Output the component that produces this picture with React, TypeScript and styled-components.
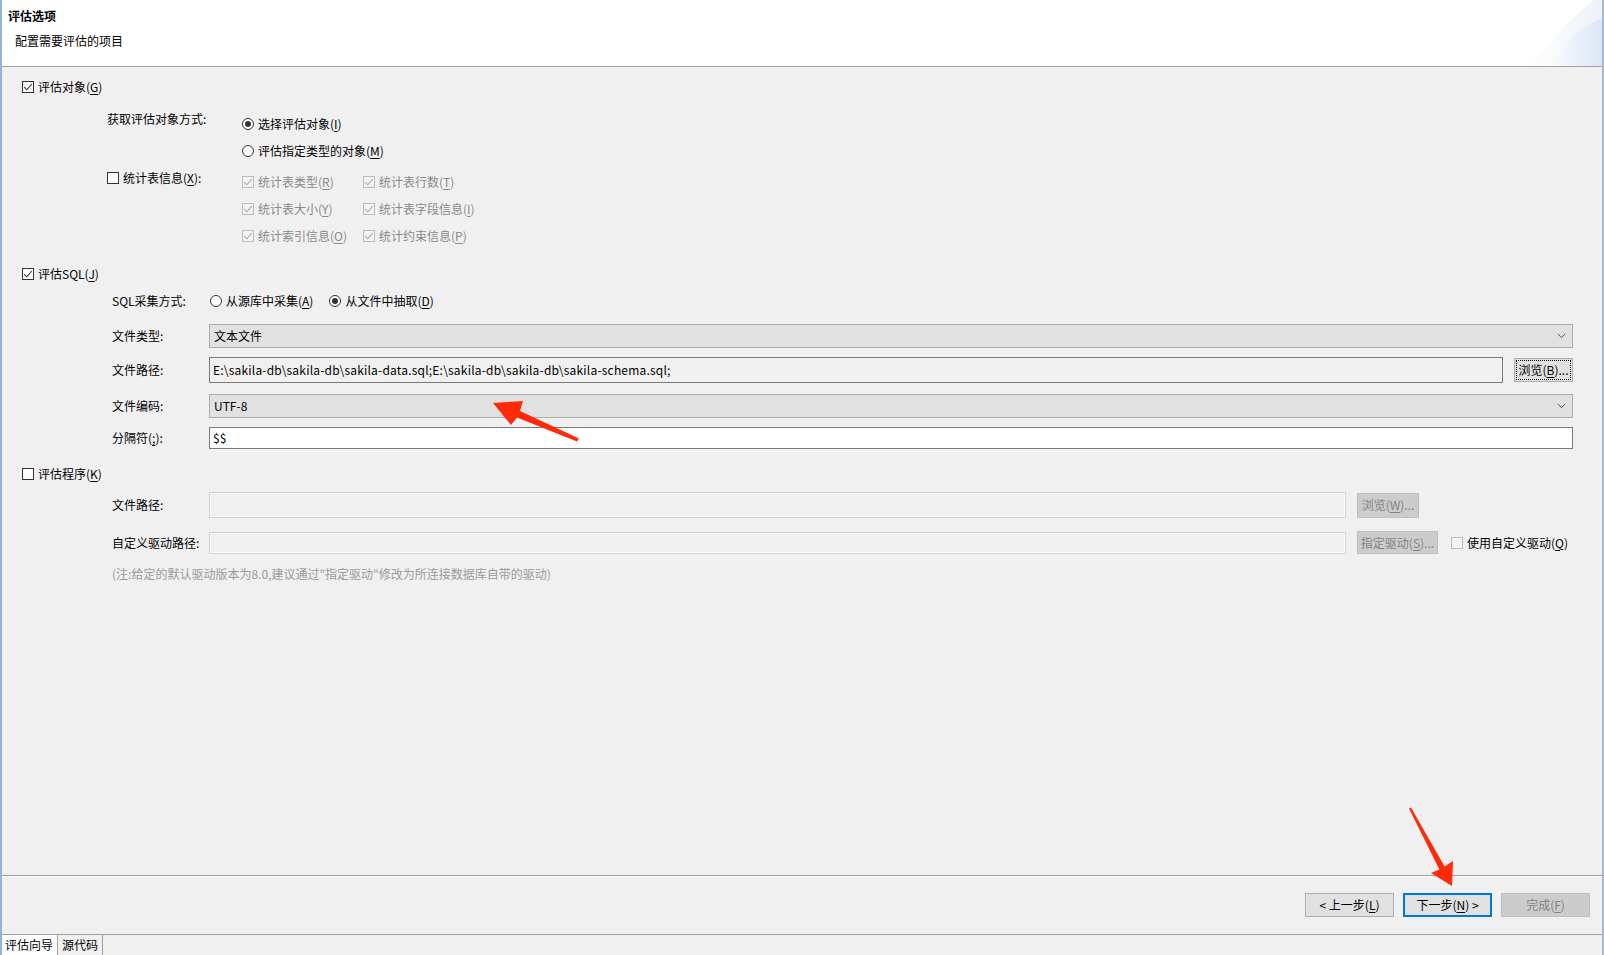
import React from "react";
import styled, { createGlobalStyle } from "styled-components";

const GlobalStyle = createGlobalStyle`
  html, body { margin: 0; padding: 0; }
  body {
    font-family: "Noto Sans CJK SC", "Noto Sans", sans-serif;
    font-size: 12px;
    color: #000;
    background: #f0f0f0;
  }
  * { box-sizing: border-box; }
  u { text-decoration: underline; text-underline-offset: 2px; }
`;

const Window = styled.div`
  position: relative;
  width: 1604px;
  height: 955px;
  display: flex;
  flex-direction: column;
  border-left: 2px solid #95b3da;
  border-right: 2px solid #aab9cd;
  background: #f0f0f0;
  overflow: hidden;
`;

const Header = styled.header`
  flex: none;
  height: 67px;
  background: #fff;
  border-bottom: 1px solid #a0a0a0;
  display: flex;
  justify-content: space-between;
`;

const HeaderText = styled.div`
  display: flex;
  flex-direction: column;
  padding: 6px 0 0 6px;
`;

const Title = styled.div`
  font-weight: 700;
  line-height: 20px;
`;

const Subtitle = styled.div`
  margin-top: 5px;
  padding-left: 7px;
  line-height: 20px;
`;

const Banner = styled.svg`
  flex: none;
  width: 84px;
  height: 66px;
  display: block;
`;

const Content = styled.main`
  flex: 1;
  padding: 10px 0 0 20px;
  display: flex;
  flex-direction: column;
`;

const Section = styled.section<{ $mt: number }>`
  margin-top: ${(p) => p.$mt}px;
  display: flex;
  flex-direction: column;
`;

const CheckRow = styled.label<{ $disabled?: boolean; $pl?: number }>`
  display: flex;
  align-items: center;
  gap: 4px;
  height: 20px;
  line-height: 16px;
  white-space: nowrap;
  padding-left: ${(p) => p.$pl ?? 0}px;
  color: ${(p) => (p.$disabled ? "#8a8a8a" : "#000")};
`;

const Box = styled.span<{ $disabled?: boolean }>`
  flex: none;
  width: 12px;
  height: 12px;
  border: 1px solid ${(p) => (p.$disabled ? "#bcbcbc" : "#333")};
  background: ${(p) => (p.$disabled ? "#f3f3f3" : "#fff")};
  display: flex;
  align-items: center;
  justify-content: center;
`;

const RadioCircle = styled.span<{ $on?: boolean }>`
  flex: none;
  width: 12px;
  height: 12px;
  border-radius: 50%;
  border: 1px solid #333;
  background: #fff;
  display: flex;
  align-items: center;
  justify-content: center;
  &::after {
    content: "";
    width: 6px;
    height: 6px;
    border-radius: 50%;
    background: #333;
    display: ${(p) => (p.$on ? "block" : "none")};
  }
`;

/* ---- section 1 ---- */
const ObjBlock = styled.div`
  margin: 12px 0 0 85px;
  display: grid;
  grid-template-columns: 135px auto;
  row-gap: 7px;
  align-items: start;
`;

const TopLabel = styled.div`
  line-height: 20px;
  height: 20px;
`;

const RadioStack = styled.div`
  padding-top: 5px;
  display: flex;
  flex-direction: column;
  gap: 7px;
`;

const OptionGrid = styled.div`
  padding-top: 4px;
  display: grid;
  grid-template-columns: 121px auto;
  row-gap: 7px;
`;

/* ---- form rows ---- */
const FormBody = styled.div`
  margin-left: 90px;
  padding-right: 29px;
  display: flex;
  flex-direction: column;
`;

const FormRow = styled.div<{ $mt: number; $h: number }>`
  margin-top: ${(p) => p.$mt}px;
  height: ${(p) => p.$h}px;
  display: flex;
  align-items: center;
`;

const FieldLabel = styled.div`
  flex: none;
  width: 97px;
  line-height: 16px;
  white-space: nowrap;
`;

const RadioLine = styled.div`
  display: flex;
  gap: 16px;
  padding-left: 1px;
`;

const Combo = styled.div`
  flex: 1;
  align-self: stretch;
  background: #e1e1e1;
  border: 1px solid #adadad;
  display: flex;
  align-items: center;
  justify-content: space-between;
  padding: 0 6px 0 4px;
  line-height: 16px;
`;

const TextField = styled.div<{ $bg: string; $ls?: number }>`
  flex: 1;
  align-self: stretch;
  background: ${(p) => p.$bg};
  border: 1px solid #7a7a7a;
  display: flex;
  align-items: center;
  padding: 0 3px;
  line-height: 16px;
  letter-spacing: ${(p) => p.$ls ?? 0}px;
  white-space: nowrap;
  overflow: hidden;
`;

const Button = styled.button<{ $w: number; $h?: number; $focus?: boolean; $disabled?: boolean; $primary?: boolean }>`
  flex: none;
  width: ${(p) => p.$w}px;
  height: ${(p) => p.$h ?? 24}px;
  padding: 0;
  font: inherit;
  line-height: 16px;
  white-space: nowrap;
  background: ${(p) => (p.$disabled ? "#cccccc" : "#e1e1e1")};
  border: ${(p) => (p.$primary ? "2px solid #0078d7" : `1px solid ${p.$disabled ? "#bfbfbf" : "#adadad"}`)};
  color: ${(p) => (p.$disabled ? "#838383" : "#000")};
  outline: ${(p) => (p.$focus ? "1px dotted #000" : "none")};
  outline-offset: -3px;
  display: flex;
  align-items: center;
  justify-content: center;
`;

const SideButton = styled(Button)`
  margin-left: 11px;
`;

/* ---- section 3 ---- */
const ProgGrid = styled.div`
  margin-left: 90px;
  padding-right: 35px;
  display: grid;
  grid-template-columns: 86px 1fr 81px 118px;
  column-gap: 11px;
  align-items: center;
`;

const GridLabel = styled.div<{ $mt: number; $h: number }>`
  margin-top: ${(p) => p.$mt}px;
  height: ${(p) => p.$h}px;
  display: flex;
  align-items: center;
  white-space: nowrap;
  line-height: 16px;
`;

const DisabledField = styled.div<{ $mt: number; $h: number }>`
  margin-top: ${(p) => p.$mt}px;
  height: ${(p) => p.$h}px;
  background: #f0f0f0;
  border: 1px solid #d3d3d3;
  box-shadow: inset 0 0 0 1px #fbfbfb;
`;

const GridCell = styled.div<{ $mt: number }>`
  margin-top: ${(p) => p.$mt}px;
  display: flex;
  align-items: center;
`;

const Note = styled.div`
  grid-column: 1 / -1;
  margin-top: 12px;
  line-height: 16px;
  color: #9a9a9a;
`;

/* ---- footer & tabs ---- */
const Footer = styled.footer`
  flex: none;
  height: 59px;
  border-top: 1px solid #a0a0a0;
  box-shadow: inset 0 1px 0 #fff;
  display: flex;
  justify-content: flex-end;
  align-items: flex-start;
  gap: 9px;
  padding: 17px 12px 0 0;
`;

const TabBar = styled.nav`
  flex: none;
  height: 21px;
  border-top: 1px solid #a0a0a0;
  display: flex;
  align-items: stretch;
`;

const Tab = styled.div<{ $active?: boolean }>`
  display: flex;
  align-items: center;
  padding: ${(p) => (p.$active ? "0 4px 0 3px" : "0 4px")};
  background: ${(p) => (p.$active ? "#fff" : "#f0f0f0")};
  border-right: 1px solid #a0a0a0;
  line-height: 16px;
`;

const Overlay = styled.svg`
  position: absolute;
  left: -2px;
  top: 0;
  width: 1604px;
  height: 955px;
  pointer-events: none;
`;

const Check = ({ color }: { color: string }) => (
  <svg width="10" height="10" viewBox="0 0 10 10">
    <polyline points="1.2,5.2 3.8,7.8 8.8,2" fill="none" stroke={color} strokeWidth="1.1" />
  </svg>
);

const CheckBox = ({ checked, disabled }: { checked?: boolean; disabled?: boolean }) => (
  <Box $disabled={disabled}>{checked && <Check color={disabled ? "#a8a8a8" : "#333"} />}</Box>
);

const Chevron = () => (
  <svg width="9" height="6" viewBox="0 0 9 6">
    <polyline points="0.8,1 4.5,4.6 8.2,1" fill="none" stroke="#555" strokeWidth="1" />
  </svg>
);

const Option = ({ text, k }: { text: string; k: string }) => (
  <CheckRow $disabled>
    <CheckBox checked disabled />
    <span>
      {text}(<u>{k}</u>)
    </span>
  </CheckRow>
);

export default function App() {
  return (
    <>
      <GlobalStyle />
      <Window>
        <Header>
          <HeaderText>
            <Title>评估选项</Title>
            <Subtitle>配置需要评估的项目</Subtitle>
          </HeaderText>
          <Banner viewBox="0 0 84 66">
            <defs>
              <linearGradient id="bg1" x1="0" y1="0" x2="1" y2="0">
                <stop offset="0" stopColor="#ffffff" />
                <stop offset="1" stopColor="#eef1f8" />
              </linearGradient>
              <linearGradient id="bg2" x1="0" y1="0" x2="1" y2="0">
                <stop offset="0" stopColor="#f6f8fc" />
                <stop offset="1" stopColor="#dce5f6" />
              </linearGradient>
            </defs>
            <path d="M10 66 C 30 44 52 18 76 0 L84 0 L84 66 Z" fill="url(#bg1)" />
            <path d="M38 66 C 46 46 60 26 84 19 L84 66 Z" fill="url(#bg2)" />
          </Banner>
        </Header>

        <Content>
          <Section $mt={0}>
            <CheckRow>
              <CheckBox checked />
              <span>
                评估对象(<u>G</u>)
              </span>
            </CheckRow>
            <ObjBlock>
              <TopLabel>获取评估对象方式:</TopLabel>
              <RadioStack>
                <CheckRow>
                  <RadioCircle $on />
                  <span>
                    选择评估对象(<u>I</u>)
                  </span>
                </CheckRow>
                <CheckRow>
                  <RadioCircle />
                  <span>
                    评估指定类型的对象(<u>M</u>)
                  </span>
                </CheckRow>
              </RadioStack>
              <CheckRow>
                <CheckBox />
                <span>
                  统计表信息(<u>X</u>):
                </span>
              </CheckRow>
              <OptionGrid>
                <Option text="统计表类型" k="R" />
                <Option text="统计表行数" k="T" />
                <Option text="统计表大小" k="Y" />
                <Option text="统计表字段信息" k="I" />
                <Option text="统计索引信息" k="O" />
                <Option text="统计约束信息" k="P" />
              </OptionGrid>
            </ObjBlock>
          </Section>

          <Section $mt={18}>
            <CheckRow>
              <CheckBox checked />
              <span>
                评估SQL(<u>J</u>)
              </span>
            </CheckRow>
            <FormBody>
              <FormRow $mt={7} $h={20}>
                <FieldLabel>SQL采集方式:</FieldLabel>
                <RadioLine>
                  <CheckRow>
                    <RadioCircle />
                    <span>
                      从源库中采集(<u>A</u>)
                    </span>
                  </CheckRow>
                  <CheckRow>
                    <RadioCircle $on />
                    <span>
                      从文件中抽取(<u>D</u>)
                    </span>
                  </CheckRow>
                </RadioLine>
              </FormRow>
              <FormRow $mt={13} $h={24}>
                <FieldLabel>文件类型:</FieldLabel>
                <Combo>
                  <span>文本文件</span>
                  <Chevron />
                </Combo>
              </FormRow>
              <FormRow $mt={9} $h={26}>
                <FieldLabel>文件路径:</FieldLabel>
                <TextField $bg="#f0f0f0" $ls={0.2}>
                  E:\sakila-db\sakila-db\sakila-data.sql;E:\sakila-db\sakila-db\sakila-schema.sql;
                </TextField>
                <SideButton $w={59} $focus>
                  浏览(<u>B</u>)...
                </SideButton>
              </FormRow>
              <FormRow $mt={11} $h={24}>
                <FieldLabel>文件编码:</FieldLabel>
                <Combo>
                  <span>UTF-8</span>
                  <Chevron />
                </Combo>
              </FormRow>
              <FormRow $mt={9} $h={22}>
                <FieldLabel>
                  分隔符(<u>;</u>):
                </FieldLabel>
                <TextField $bg="#fff">$$</TextField>
              </FormRow>
            </FormBody>
          </Section>

          <Section $mt={15}>
            <CheckRow>
              <CheckBox />
              <span>
                评估程序(<u>K</u>)
              </span>
            </CheckRow>
            <ProgGrid>
              <GridLabel $mt={8} $h={26}>文件路径:</GridLabel>
              <DisabledField $mt={8} $h={26} />
              <GridCell $mt={8}>
                <Button $w={62} $h={25} $disabled>
                  浏览(<u>W</u>)...
                </Button>
              </GridCell>
              <GridCell $mt={8} />

              <GridLabel $mt={13} $h={22}>自定义驱动路径:</GridLabel>
              <DisabledField $mt={13} $h={22} />
              <GridCell $mt={13}>
                <Button $w={81} $h={23} $disabled>
                  指定驱动(<u>S</u>)...
                </Button>
              </GridCell>
              <GridCell $mt={13}>
                <CheckRow $pl={2}>
                  <Box $disabled />
                  <span>
                    使用自定义驱动(<u>Q</u>)
                  </span>
                </CheckRow>
              </GridCell>

              <Note>(注:给定的默认驱动版本为8.0,建议通过"指定驱动"修改为所连接数据库自带的驱动)</Note>
            </ProgGrid>
          </Section>
        </Content>

        <Footer>
          <Button $w={89}>
            &lt; 上一步(<u>L</u>)
          </Button>
          <Button $w={89} $primary>
            下一步(<u>N</u>) &gt;
          </Button>
          <Button $w={89} $disabled>
            完成(<u>F</u>)
          </Button>
        </Footer>

        <TabBar>
          <Tab $active>评估向导</Tab>
          <Tab>源代码</Tab>
        </TabBar>

        <Overlay viewBox="0 0 1604 955">
          <polygon
            points="493,403 523,401 520,411 579,438.5 577,441.5 517,417.5 511,425"
            fill="#ff2a0a"
          />
          <polygon
            points="1452,886 1453,861 1444.6,866.6 1411,807.5 1409,808.5 1439.4,869.4 1431,873"
            fill="#ff2a0a"
          />
        </Overlay>
      </Window>
    </>
  );
}
